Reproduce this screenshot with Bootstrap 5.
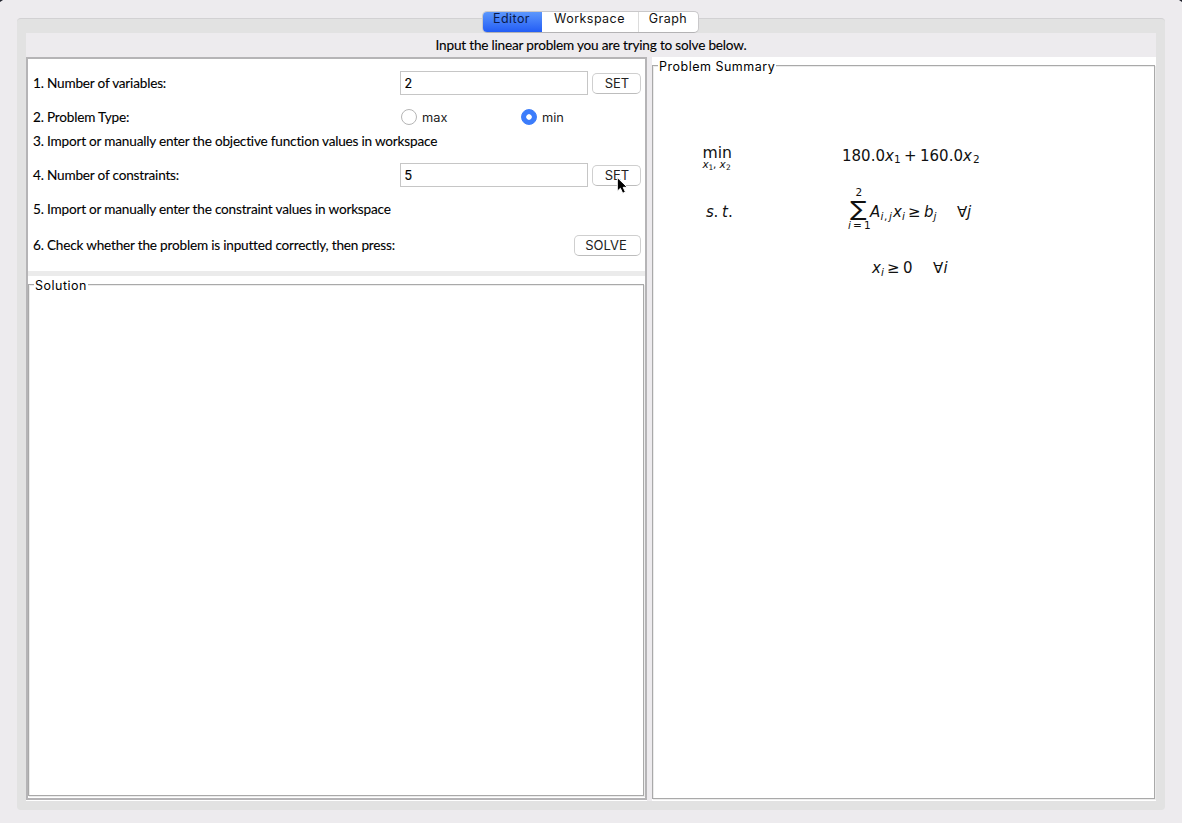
<!DOCTYPE html>
<html lang="en">
<head>
<meta charset="utf-8">
<title>Linear Problem Editor</title>
<link rel="stylesheet" href="https://cdn.jsdelivr.net/npm/bootstrap@5.3.0/dist/css/bootstrap.min.css">
<style>
body{background:#edebee;font-family:Inter,"Liberation Sans",sans-serif;font-size:13px;line-height:16px;color:#000;height:823px;overflow:hidden}
.corner{top:0;width:3px;height:2px;background:#20222c}
.corner-l{left:0;clip-path:polygon(0 0,100% 0,0 100%)}
.corner-r{right:0;clip-path:polygon(0 0,100% 0,100% 100%)}
.frame{margin:18px 17px 0;height:792px;padding:0 9px 9px;background:#e2e2e2;border-top:1px solid #d2d1d3;border-radius:4px}
.tabs{height:14px;margin-top:-1px;padding-right:2px}
.segments{height:22px;margin-top:-7px;width:217px;background:#fff;border:1px solid #c9c8ca;border-bottom-color:#b4b3b5;border-radius:5px;position:relative;z-index:1;overflow:hidden}
.segments .seg{padding:0;border:0;border-radius:0;font-size:12.5px;line-height:14px;color:#111;letter-spacing:.45px;height:21px;display:flex;justify-content:center;align-items:flex-start}
.segments .seg.active{background:linear-gradient(#5c97fc,#205af5);color:#0a1a4a;margin-left:-1px}
.segments .seg+.seg+.seg{border-left:1px solid #dcdcdc}
.banner{height:24px;margin-top:1px;background:#edebee}
.calib{font-family:Lato,"Liberation Sans",sans-serif;font-size:13.6px;letter-spacing:-.2px;white-space:pre;-webkit-text-stroke:.1px #000}
.panes{height:744px}
.pane-l{width:621px;height:743px;border:2px solid #b5b4b6;background:#fff;box-shadow:0 1px #fff}
.gutter{width:5px;background:#edebee;height:744px}
.pane-r{width:504px;background:#fff;padding-top:8px}
.form-area{height:212px;padding:0 4px 0 5px}
.line{display:flex;align-items:center}
.field{width:188px;height:24px;border:1px solid #c6c6c6;border-radius:0;padding:0 3.5px;font-size:12.5px;color:#000;background:#fff;-webkit-text-stroke:.2px #000}
.push{height:21px;border:1px solid #cfcfcf;border-bottom-color:#bdbdbd;border-radius:5px;padding:0 0 0 1px;font-size:13px;line-height:19px;color:#222;background:#fff}
.radio-text{font-size:12.8px;color:#222;padding-top:1px}
.dial{width:16px;height:16px;margin:-1px 5px 0 0;border:1px solid #b5b5b5;float:none}
.dial:checked{background:radial-gradient(circle,#fff 0 2.4px,#3b7cfb 3.1px);border-color:#3b7cfb}
.split{height:5px;background:#ebebeb}
.group{border:1px solid #a9a9a9;box-shadow:inset 1px 1px #ececec,1px 1px #ececec}
.group>span{background:#fff;display:block;width:max-content;margin-top:-7px;margin-bottom:-1px;padding:0 1px;letter-spacing:.5px;font-size:12.5px;line-height:16px}
.group-sol{height:512px;margin-top:8px;width:616px}
.group-sum{height:734px;width:503px}
.math{font-family:"DejaVu Sans",sans-serif;font-size:15px;fill:#111}
.math .it{font-style:italic}
.math .sub{font-size:10.5px}
.math .tiny{font-size:7.5px}
.pointer{left:616px;top:176px;z-index:3}
</style>
</head>
<body class="position-relative">
<div class="corner corner-l position-absolute"></div><div class="corner corner-r position-absolute"></div>
<main class="overflow-hidden">
<div class="frame">
  <div class="tabs d-flex justify-content-center">
    <div class="segments d-flex" role="tablist">
      <button class="btn seg active" style="width:60px">Editor</button>
      <button class="btn seg" style="width:96px">Workspace</button>
      <button class="btn seg flex-fill">Graph</button>
    </div>
  </div>
  <div class="banner d-flex align-items-center justify-content-center"><span class="calib">Input the linear problem you are trying to solve below.</span></div>
  <div class="panes d-flex">
    <section class="pane-l">
      <div class="form-area d-flex flex-column">
        <div class="line" style="height:48px"><span class="calib flex-fill">1. Number of variables:</span><input class="form-control field" value="2"><button class="btn push ms-1" style="width:49px">SET</button></div>
        <div class="line" style="height:20px"><span class="calib" style="width:368px">2. Problem Type:</span>
          <label class="d-flex align-items-center" style="width:120px"><input class="form-check-input dial" type="radio" name="kind"><span class="radio-text">max</span></label>
          <label class="d-flex align-items-center"><input class="form-check-input dial" type="radio" name="kind" checked><span class="radio-text">min</span></label></div>
        <div class="line" style="height:28px"><span class="calib">3. Import or manually enter the objective function values in workspace</span></div>
        <div class="line" style="height:40px"><span class="calib flex-fill">4. Number of constraints:</span><input class="form-control field" value="5"><button class="btn push ms-1" style="width:49px">SET</button></div>
        <div class="line" style="height:28px"><span class="calib">5. Import or manually enter the constraint values in workspace</span></div>
        <div class="line" style="height:44px"><span class="calib flex-fill">6. Check whether the problem is inputted correctly, then press:</span><button class="btn push pe-1" style="width:67px">SOLVE</button></div>
      </div>
      <div class="split"></div>
      <div class="group group-sol"><span style="margin-left:5px">Solution</span></div>
    </section>
    <div class="gutter"></div>
    <section class="pane-r">
      <div class="group group-sum"><span style="margin-left:5px">Problem Summary</span>
        <svg class="math d-block" width="480" height="220" viewBox="653 74 480 220">
          <text x="702.5" y="158" textLength="29.5" lengthAdjust="spacingAndGlyphs">min</text>
          <text class="sub" y="168"><tspan class="it" x="702.5">x</tspan><tspan class="tiny" x="708.5" y="170">1</tspan><tspan x="713" y="168">,</tspan><tspan class="it" x="719.5">x</tspan><tspan class="tiny" x="726" y="170">2</tspan></text>
          <text y="161"><tspan x="842">180.0</tspan><tspan class="it" x="885">x</tspan><tspan class="sub" x="894" y="163">1</tspan><tspan x="904" y="161">+</tspan><tspan x="920">160.0</tspan><tspan class="it" x="963">x</tspan><tspan class="sub" x="973" y="163">2</tspan></text>
          <text y="217"><tspan class="it" x="706">s</tspan><tspan x="713.5">.</tspan><tspan class="it" x="722">t</tspan><tspan x="728">.</tspan></text>
          <text class="sub" x="855.5" y="196">2</text><text x="850.3" y="216" style="font-size:21px" textLength="16.5" lengthAdjust="spacingAndGlyphs">∑</text>
          <text class="sub" y="229"><tspan class="it" x="848">i</tspan><tspan x="853">=</tspan><tspan x="864">1</tspan></text>
          <text y="217"><tspan class="it" x="870">A</tspan><tspan class="sub it" x="880.5" y="219.5">i</tspan><tspan class="sub" x="884">,</tspan><tspan class="sub it" x="889">j</tspan><tspan class="it" x="893" y="217">x</tspan><tspan class="sub it" x="902" y="219.5">i</tspan><tspan x="908" y="217">≥</tspan><tspan class="it" x="924">b</tspan><tspan class="sub it" x="933.5" y="219.5">j</tspan><tspan x="957" y="217">∀</tspan><tspan class="it" x="967">j</tspan></text>
          <text y="273"><tspan class="it" x="872">x</tspan><tspan class="sub it" x="881" y="275.5">i</tspan><tspan x="887" y="273">≥</tspan><tspan x="903">0</tspan><tspan x="933">∀</tspan><tspan class="it" x="943.5">i</tspan></text>
        </svg>
      </div>
    </section>
  </div>
</div>
</main>
<svg class="pointer position-absolute" width="14" height="20" viewBox="0 0 14 20"><path d="M1.3 1.5V15.2L4.4 12.3 6.7 17.3 9.4 16.1 7.2 11.3H11.3Z" fill="#000" stroke="#fff" stroke-width="1"/></svg>
<script src="https://cdn.jsdelivr.net/npm/bootstrap@5.3.0/dist/js/bootstrap.bundle.min.js"></script>
</body>
</html>
